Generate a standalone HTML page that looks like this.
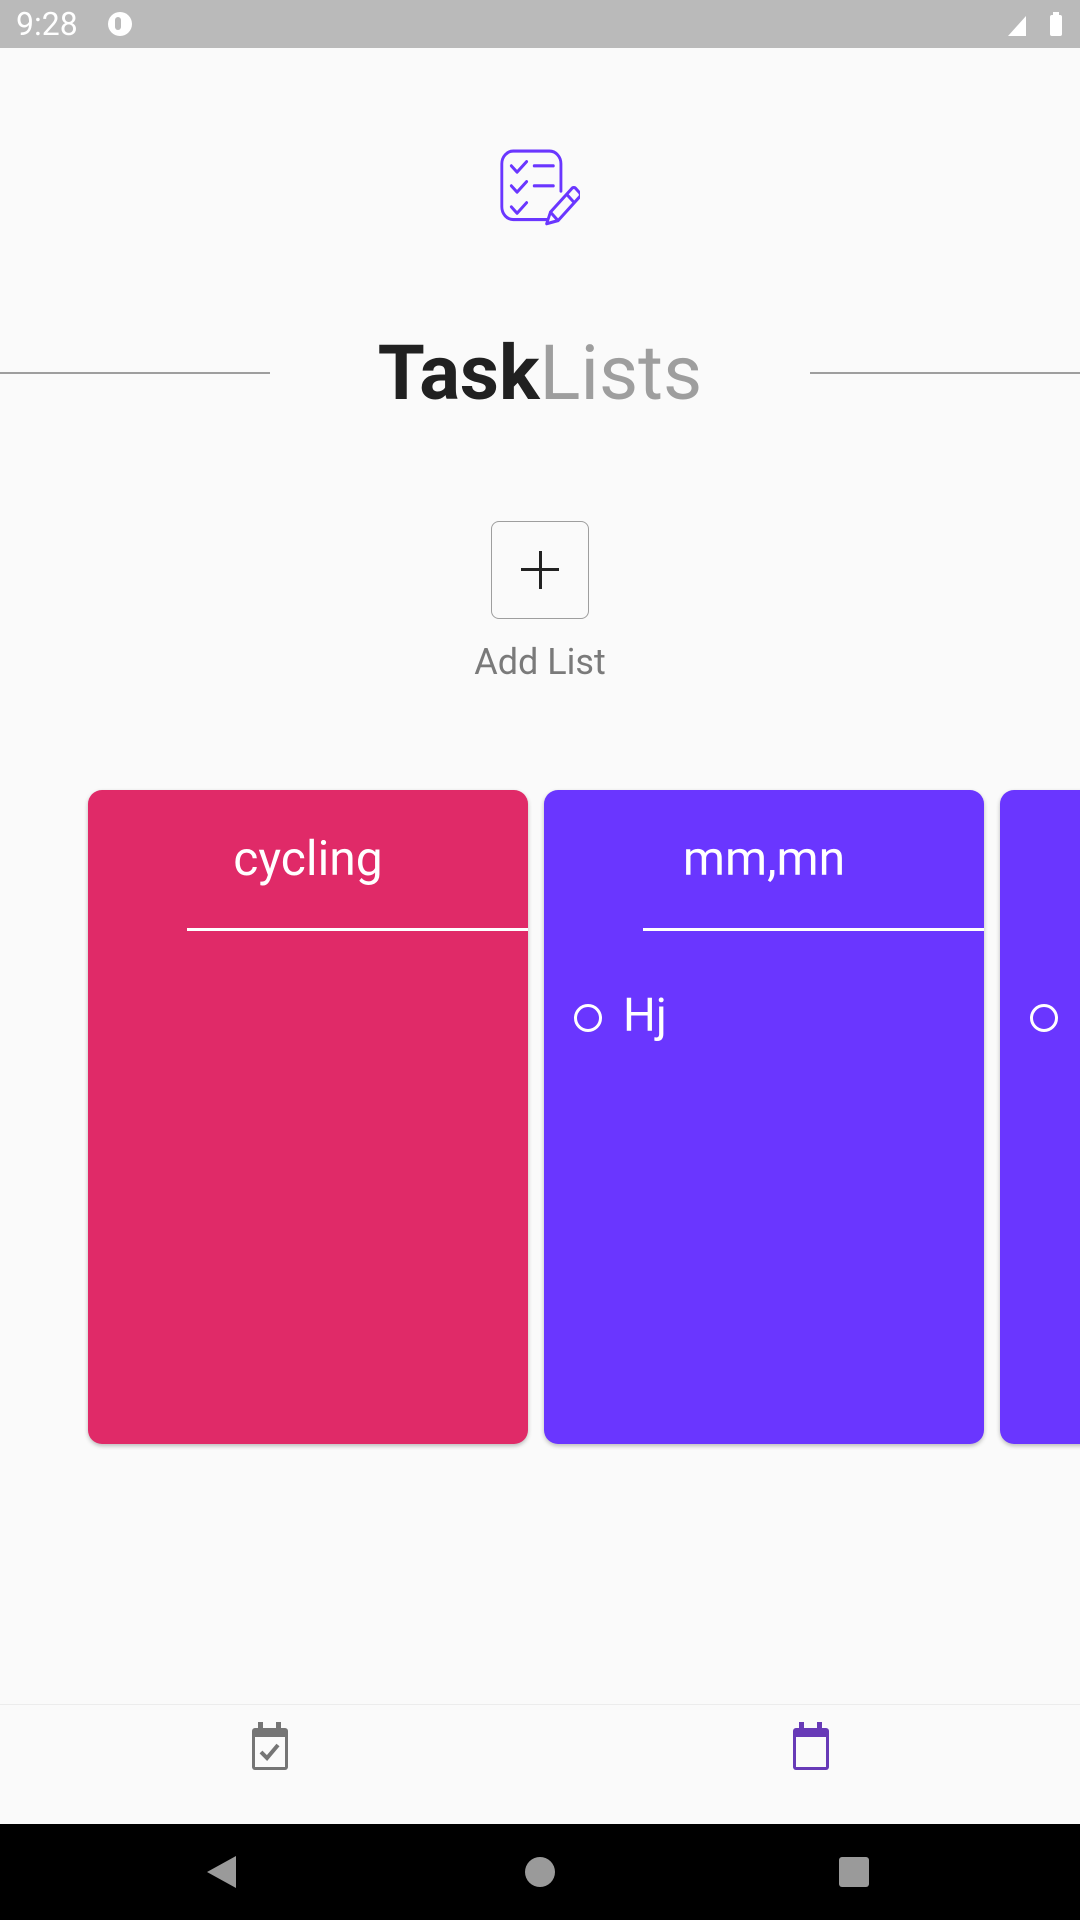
<!DOCTYPE html>
<html><head><meta charset="utf-8"><style>
*{margin:0;padding:0;box-sizing:border-box}
body{width:1080px;height:1920px;background:#fafafa;position:relative;overflow:hidden;font-family:"Roboto","Liberation Sans",sans-serif}
.abs{position:absolute}
.card{position:absolute;top:790px;height:654px;width:440px;border-radius:14px;box-shadow:0 2px 4px rgba(0,0,0,.25)}
.title{position:absolute;top:39px;left:0;width:440px;text-align:center;color:#fff;font-size:48px;line-height:60px}
.ul{position:absolute;top:138px;left:99px;right:0;height:3px;background:#fff}
.circ{position:absolute;width:28px;height:28px;border:3px solid #fff;border-radius:50%}
</style></head><body>
<div class="abs" style="left:0;top:0;width:1080px;height:48px;background:#bababa"></div>
<div class="abs" style="left:16px;top:4px;color:#fff;font-size:32px;line-height:40px">9:28</div>
<div class="abs" style="left:108px;top:12px;width:24px;height:24px;border-radius:50%;background:#fff"></div>
<div class="abs" style="left:115px;top:17px;width:6px;height:13px;border-radius:3px;background:#bababa"></div>
<svg class="abs" style="left:1006px;top:12px" width="60" height="26"><polygon points="2,24 20,4 20,24" fill="#fff"/><rect x="44" y="3" width="12" height="21" rx="2" fill="#fff"/><rect x="47" y="0" width="6" height="4" fill="#fff"/></svg>

<svg class="abs" style="left:498px;top:149px" width="82" height="80" viewBox="0 0 86 76" preserveAspectRatio="none" fill="none" stroke="#6a36ff" stroke-width="3" stroke-linecap="round" stroke-linejoin="round">
<path d="M52 67H16a12 12 0 0 1-12-12V14A12 12 0 0 1 16 2h38a12 12 0 0 1 12 12v26"/>
<path d="M14 16l6 6 10-10M14 35l6 6 10-10M14 55l6 6 10-10M38 16h20M38 35h20"/>
<path d="M51 71l4-11 22-22a3 3 0 0 1 5 0l3 3a3 3 0 0 1 0 5L63 68zM55 60l8 8M72 43l8 8"/>
</svg>

<div class="abs" style="left:0;top:372px;width:270px;height:2px;background:#9e9e9e"></div>
<div class="abs" style="left:810px;top:372px;width:270px;height:2px;background:#9e9e9e"></div>
<div class="abs" style="left:0;top:328px;width:1080px;text-align:center;font-size:76px;line-height:90px"><b style="color:#212121">Task</b><span style="color:#9e9e9e">Lists</span></div>

<div class="abs" style="left:491px;top:521px;width:98px;height:98px;border:1.5px solid #9e9e9e;border-radius:8px"></div>
<div class="abs" style="left:521px;top:568px;width:38px;height:3px;background:#222"></div>
<div class="abs" style="left:538.5px;top:551px;width:3px;height:38px;background:#222"></div>
<div class="abs" style="left:0;top:640px;width:1080px;text-align:center;color:#7a7a7a;font-size:36px;line-height:44px">Add List</div>

<div class="card" style="left:88px;background:#e02a68"><div class="title">cycling</div><div class="ul"></div></div>
<div class="card" style="left:544px;background:#6a36ff"><div class="title">mm,mn</div><div class="ul"></div>
<div class="circ" style="left:30px;top:214px"></div><div class="abs" style="left:79px;top:198px;color:#fff;font-size:46px;line-height:56px">Hj</div></div>
<div class="card" style="left:1000px;background:#6a36ff"><div class="circ" style="left:30px;top:214px"></div></div>

<div class="abs" style="left:0;top:1704px;width:1080px;height:120px;background:#fafafa;border-top:1px solid #ececec"></div>
<svg class="abs" style="left:250px;top:1722px" width="44" height="50" viewBox="0 0 44 50"><rect x="8" y="0" width="5" height="8" fill="#757575"/><rect x="26" y="0" width="5" height="8" fill="#757575"/><rect x="2" y="6" width="36" height="42" rx="3" fill="#757575"/><rect x="5" y="15" width="30" height="30" fill="#fafafa"/><path d="M11 30l6 6 11-13" stroke="#757575" stroke-width="4" fill="none"/></svg>
<svg class="abs" style="left:791px;top:1722px" width="44" height="50" viewBox="0 0 44 50"><rect x="8" y="0" width="5" height="8" fill="#673ab7"/><rect x="26" y="0" width="5" height="8" fill="#673ab7"/><rect x="2" y="6" width="36" height="42" rx="3" fill="#673ab7"/><rect x="5" y="15" width="30" height="30" fill="#fafafa"/></svg>

<div class="abs" style="left:0;top:1824px;width:1080px;height:96px;background:#000"></div>
<svg class="abs" style="left:200px;top:1850px" width="700" height="44"><polygon points="7,22 36,6 36,38" fill="#9a9a9a"/><circle cx="340" cy="22" r="15" fill="#9a9a9a"/><rect x="639" y="7" width="30" height="30" rx="3" fill="#9a9a9a"/></svg>
</body></html>
